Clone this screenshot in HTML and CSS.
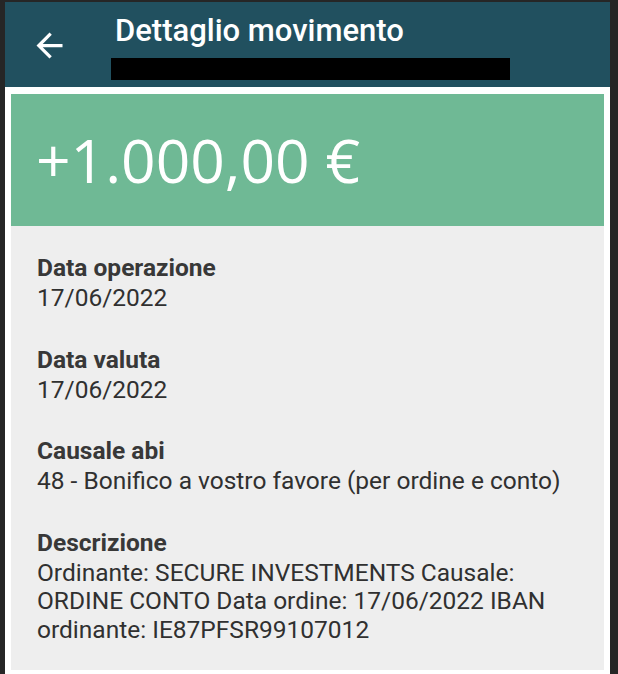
FILE: index.html
```html
<!DOCTYPE html>
<html lang="it">
<head>
<meta charset="utf-8">
<title>Dettaglio movimento</title>
<link rel="stylesheet" href="styles.css">
</head>
<body>
<div class="frame">
  <header class="appbar">
    <svg class="back" viewBox="0 0 24 24" aria-hidden="true">
      <path d="M20 11H7.83l5.59-5.59L12 4l-8 8 8 8 1.41-1.41L7.83 13H20v-2z" fill="#ffffff"/>
    </svg>
    <div class="titles">
      <div class="title">Dettaglio movimento</div>
      <div class="redacted"></div>
    </div>
  </header>
  <main class="panel">
    <div class="amount-card">
      <span class="amount">+1.000,00 €</span>
    </div>
    <div class="details">
      <div class="field">
        <div class="label">Data operazione</div>
        <div class="value">17/06/2022</div>
      </div>
      <div class="field">
        <div class="label">Data valuta</div>
        <div class="value">17/06/2022</div>
      </div>
      <div class="field">
        <div class="label">Causale abi</div>
        <div class="value">48 - Bonifico a vostro favore (per ordine e conto)</div>
      </div>
      <div class="field">
        <div class="label">Descrizione</div>
        <div class="value">Ordinante: SECURE INVESTMENTS Causale: ORDINE CONTO Data ordine: 17/06/2022 IBAN ordinante: IE87PFSR99107012</div>
      </div>
    </div>
  </main>
</div>
</body>
</html>
```

FILE: styles.css
```css
html, body {
  margin: 0;
  padding: 0;
  background: #262626;
  height: 100%;
}

body {
  font-family: Roboto, "Liberation Sans", sans-serif;
  overflow: hidden;
}

.frame {
  margin: 2px 8px 0 5px;
  display: flex;
  flex-direction: column;
}

.appbar {
  background: #21505f;
  height: 85px;
  box-sizing: border-box;
  padding: 11px 0 7px 0;
  display: flex;
  align-items: flex-start;
}

.back {
  width: 39px;
  height: 39px;
  margin: 13px 0 0 24.6px;
  flex: none;
}

.titles {
  margin-left: 42.4px;
  display: flex;
  flex-direction: column;
}

.title {
  color: #ffffff;
  font-weight: 500;
  font-size: 31px;
  line-height: 36px;
  padding-left: 4px;
  white-space: nowrap;
}

.redacted {
  margin-top: 9px;
  width: 399px;
  height: 22px;
  background: #000000;
}

.panel {
  background: #ffffff;
  padding: 7px 6px 4px 6px;
  display: flex;
  flex-direction: column;
}

.amount-card {
  background: #6fb995;
  height: 132px;
  box-sizing: border-box;
  padding-left: 25px;
  padding-top: 1px;
  display: flex;
  align-items: center;
}

.amount {
  color: #ffffff;
  font-family: "Open Sans", "Noto Sans", sans-serif;
  font-size: 60.5px;
  line-height: 1;
}

.details {
  background: #eeeeee;
  padding: 28px 26px 26px 26px;
  display: flex;
  flex-direction: column;
  gap: 33px;
  color: #333333;
  font-size: 24.5px;
  line-height: 28.3px;
}

.label {
  font-weight: 700;
  color: #383838;
  margin-bottom: 2px;
}

.value {
  color: #303030;
}
```
